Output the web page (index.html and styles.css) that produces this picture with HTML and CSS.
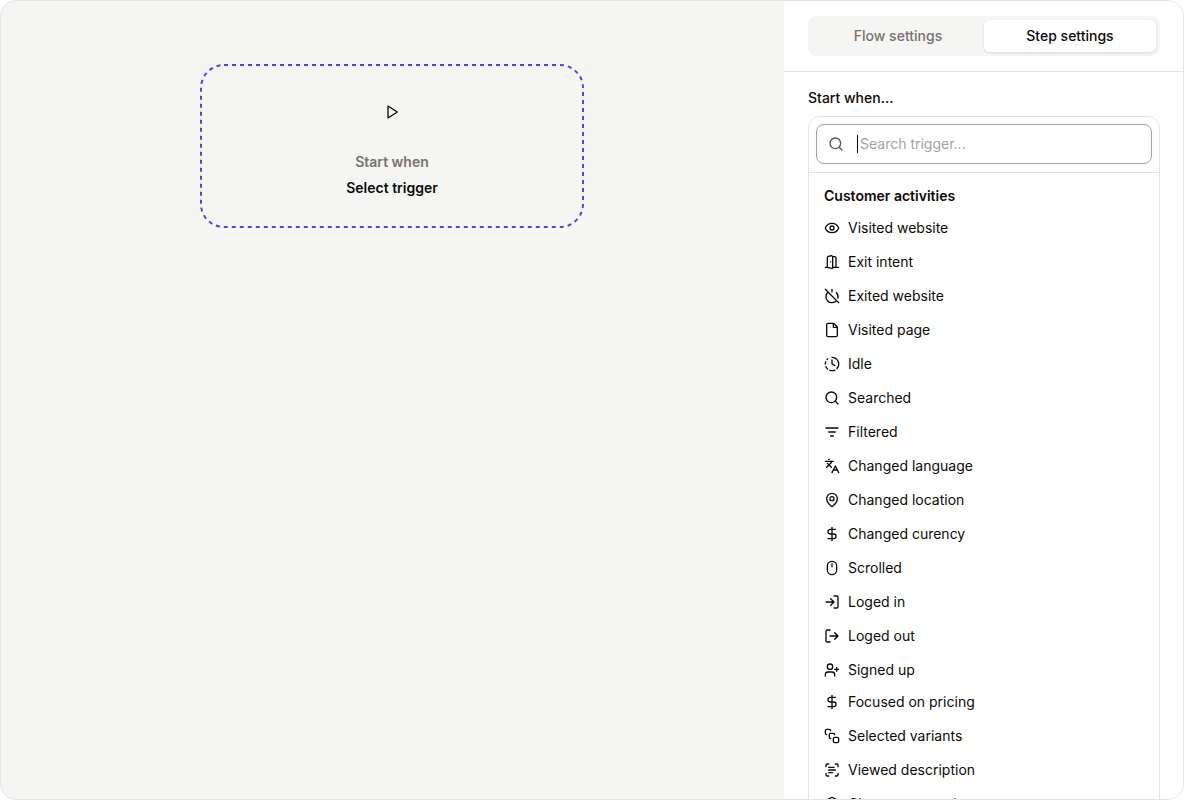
FILE: index.html
```html
<!DOCTYPE html>
<html lang="en">
<head>
<meta charset="utf-8">
<title>Flow editor</title>
<link rel="stylesheet" href="styles.css">
</head>
<body>
<div class="frame">
  <main class="canvas">
    <button class="trigger-card" type="button">
      <svg class="dashes" aria-hidden="true"><rect x="1" y="1" rx="23"/></svg>
      <span class="play"><svg class="icon" viewBox="0 0 24 24"><path d="M6 3l14 9-14 9z"/></svg></span>
      <span class="hint">Start when</span>
      <span class="choice">Select trigger</span>
    </button>
  </main>
  <aside class="sidebar">
    <header class="sidebar-head">
      <div class="tabs" role="tablist">
        <button class="tab" type="button" role="tab" aria-selected="false">Flow settings</button>
        <button class="tab active" type="button" role="tab" aria-selected="true">Step settings</button>
      </div>
    </header>
    <section class="step">
      <label class="label" for="trigger">Start when...</label>
      <div class="picker">
        <div class="search-row">
          <div class="search">
            <svg class="icon" viewBox="0 0 24 24"><circle cx="11" cy="11" r="8"/><path d="m21 21-4.3-4.3"/></svg>
            <span class="caret"></span>
            <input id="trigger" type="text" placeholder="Search trigger...">
          </div>
        </div>
        <div class="options">
          <h2 class="group-title">Customer activities</h2>
          <div class="group">
            <button class="option" type="button"><svg class="icon" viewBox="0 0 24 24"><path d="M2.06 12.35a1 1 0 0 1 0-.7 10.75 10.75 0 0 1 19.88 0 1 1 0 0 1 0 .7 10.75 10.75 0 0 1-19.88 0"/><circle cx="12" cy="12" r="3"/></svg>Visited website</button>
            <button class="option" type="button"><svg class="icon" viewBox="0 0 24 24"><path d="M13 4h3a2 2 0 0 1 2 2v14M2 20h3M13 20h9M10 12v.01M13 4.562v16.157a1 1 0 0 1-1.242.97L5 20V5.562a2 2 0 0 1 1.515-1.94l4-1A2 2 0 0 1 13 4.561Z"/></svg>Exit intent</button>
            <button class="option" type="button"><svg class="icon" viewBox="0 0 24 24"><path d="M18.36 6.64A9 9 0 0 1 20.77 15M6.16 6.16a9 9 0 1 0 12.68 12.68M12 2v4M2 2l20 20"/></svg>Exited website</button>
            <button class="option" type="button"><svg class="icon" viewBox="0 0 24 24"><path d="M14.5 2H6a2 2 0 0 0-2 2v16a2 2 0 0 0 2 2h12a2 2 0 0 0 2-2V7.5L14.5 2zM14 2v6h6"/></svg>Visited page</button>
            <button class="option" type="button"><svg class="icon" viewBox="0 0 24 24"><path d="M12 2a10 10 0 0 1 7.38 16.75M12 6v6l4 2M2.5 8.875a10 10 0 0 0-.5 3M2.83 16a10 10 0 0 0 2.43 3.4M4.636 5.235a10 10 0 0 1 .891-.857M8.644 21.42a10 10 0 0 0 7.631-.38"/></svg>Idle</button>
            <button class="option" type="button"><svg class="icon" viewBox="0 0 24 24"><circle cx="11" cy="11" r="8"/><path d="m21 21-4.3-4.3"/></svg>Searched</button>
            <button class="option" type="button"><svg class="icon" viewBox="0 0 24 24"><path d="M3 6h18M7 12h10M10 18h4"/></svg>Filtered</button>
            <button class="option" type="button"><svg class="icon" viewBox="0 0 24 24"><path d="m5 8 6 6M4 14l6-6 2-3M2 5h12M7 2h1M22 22l-5-10-5 10M14 18h6"/></svg>Changed language</button>
            <button class="option" type="button"><svg class="icon" viewBox="0 0 24 24"><path d="M20 10c0 6-8 12-8 12s-8-6-8-12a8 8 0 0 1 16 0Z"/><circle cx="12" cy="10" r="3"/></svg>Changed location</button>
            <button class="option" type="button"><svg class="icon" viewBox="0 0 24 24"><path d="M12 2v20M17 5H9.5a3.5 3.5 0 0 0 0 7h5a3.5 3.5 0 0 1 0 7H6"/></svg>Changed curency</button>
            <button class="option" type="button"><svg class="icon" viewBox="0 0 24 24"><rect x="5" y="2" width="14" height="20" rx="7"/><path d="M12 6v4"/></svg>Scrolled</button>
            <button class="option" type="button"><svg class="icon" viewBox="0 0 24 24"><path d="M15 3h4a2 2 0 0 1 2 2v14a2 2 0 0 1-2 2h-4M10 17l5-5-5-5M15 12H3"/></svg>Loged in</button>
            <button class="option" type="button"><svg class="icon" viewBox="0 0 24 24"><path d="M9 21H5a2 2 0 0 1-2-2V5a2 2 0 0 1 2-2h4M16 17l5-5-5-5M21 12H9"/></svg>Loged out</button>
            <button class="option" type="button"><svg class="icon" viewBox="0 0 24 24"><path d="M16 21v-2a4 4 0 0 0-4-4H6a4 4 0 0 0-4 4v2M19 8v6M22 11h-6"/><circle cx="9" cy="7" r="4"/></svg>Signed up</button>
          </div>
          <div class="group">
            <button class="option" type="button"><svg class="icon" viewBox="0 0 24 24"><path d="M12 2v20M17 5H9.5a3.5 3.5 0 0 0 0 7h5a3.5 3.5 0 0 1 0 7H6"/></svg>Focused on pricing</button>
            <button class="option" type="button"><svg class="icon" viewBox="0 0 24 24"><path d="M4 10c-1.1 0-2-.9-2-2V4c0-1.1.9-2 2-2h4c1.1 0 2 .9 2 2M10 16c-1.1 0-2-.9-2-2v-4c0-1.1.9-2 2-2h4c1.1 0 2 .9 2 2"/><rect x="14" y="14" width="8" height="8" rx="2"/></svg>Selected variants</button>
            <button class="option" type="button"><svg class="icon" viewBox="0 0 24 24"><path d="M3 7V5a2 2 0 0 1 2-2h2M17 3h2a2 2 0 0 1 2 2v2M21 17v2a2 2 0 0 1-2 2h-2M7 21H5a2 2 0 0 1-2-2v-2M7 8h8M7 12h10M7 16h6"/></svg>Viewed description</button>
            <button class="option" type="button"><svg class="icon" viewBox="0 0 24 24"><path d="M21 8a2 2 0 0 0-1-1.73l-7-4a2 2 0 0 0-2 0l-7 4A2 2 0 0 0 3 8v8a2 2 0 0 0 1 1.73l7 4a2 2 0 0 0 2 0l7-4A2 2 0 0 0 21 16ZM3.3 7l8.7 5 8.7-5M12 22V12"/></svg>Chose store option</button>
          </div>
        </div>
      </div>
    </section>
  </aside>
</div>
</body>
</html>
```
FILE: styles.css
```css
* { box-sizing: border-box; }

body {
  margin: 0;
  background: #fff;
  color: #0c0a09;
  font: 14px/20px Inter, "Liberation Sans", sans-serif;
}

button, input {
  font: inherit;
  color: inherit;
  background: none;
  border: 0;
  padding: 0;
}

.frame {
  position: relative;
  display: flex;
  height: 100vh;
  overflow: hidden;
  border-radius: 16px;
}

.frame::after {
  content: "";
  position: absolute;
  inset: 0;
  border: 1px solid #e5e5e5;
  border-radius: 16px;
  pointer-events: none;
}

.canvas {
  flex: 1;
  display: flex;
  justify-content: center;
  align-items: flex-start;
  padding: 64px 24px;
  background: #f5f5f4;
}

.trigger-card {
  position: relative;
  display: flex;
  flex-direction: column;
  align-items: center;
  gap: 6px;
  width: 100%;
  max-width: 384px;
  padding: 24px 24px 30px;
  font-weight: 600;
}

.dashes {
  position: absolute;
  inset: 0;
  width: 100%;
  height: 100%;
}

.dashes rect {
  width: calc(100% - 2px);
  height: calc(100% - 2px);
  fill: none;
  stroke: #4f46e5;
  stroke-width: 2;
  stroke-dasharray: 4 4;
}

.play {
  display: flex;
  align-items: center;
  justify-content: center;
  width: 48px;
  height: 48px;
  margin-bottom: 10px;
}

.hint { color: #78716c; }

.icon {
  flex: none;
  width: 16px;
  height: 16px;
  fill: none;
  stroke: currentColor;
  stroke-width: 2;
  stroke-linecap: round;
  stroke-linejoin: round;
}

.sidebar {
  width: 400px;
  flex: none;
  background: #fff;
}

.sidebar-head {
  padding: 16px 24px 15px;
  border-bottom: 1px solid #e5e5e5;
}

.tabs {
  display: flex;
  padding: 4px;
  border-radius: 8px;
  background: #f5f5f4;
}

.tab {
  flex: 1;
  height: 32px;
  border-radius: 6px;
  color: #78716c;
  font-weight: 500;
}

.tab.active {
  background: #fff;
  color: #0c0a09;
  box-shadow: 0 1px 3px rgba(0, 0, 0, 0.12);
}

.step { padding: 16px 24px; }

.label {
  display: block;
  margin-bottom: 8px;
  font-weight: 500;
}

.picker {
  border: 1px solid #e5e5e5;
  border-radius: 12px;
}

.search-row {
  padding: 7px 7px 8px;
  border-bottom: 1px solid #e5e5e5;
}

.search {
  display: flex;
  align-items: center;
  height: 40px;
  padding: 0 11px;
  border: 1px solid #a8a29e;
  border-radius: 8px;
  color: #57534e;
}

.caret {
  width: 1px;
  height: 18px;
  margin-left: 13px;
  margin-right: 2px;
  background: #0c0a09;
}

.search input {
  flex: 1;
  min-width: 0;
  outline: none;
  caret-color: transparent;
}

.search input::placeholder {
  color: #a8a29e;
  opacity: 1;
}

.options { padding: 7px; }

.group-title {
  margin: 0;
  padding: 6px 8px;
  font-size: 14px;
  line-height: 20px;
  font-weight: 600;
}

.group {
  display: flex;
  flex-direction: column;
  gap: 2px;
}

.option {
  display: flex;
  align-items: center;
  gap: 8px;
  height: 32px;
  padding: 0 8px;
  text-align: left;
}
```
